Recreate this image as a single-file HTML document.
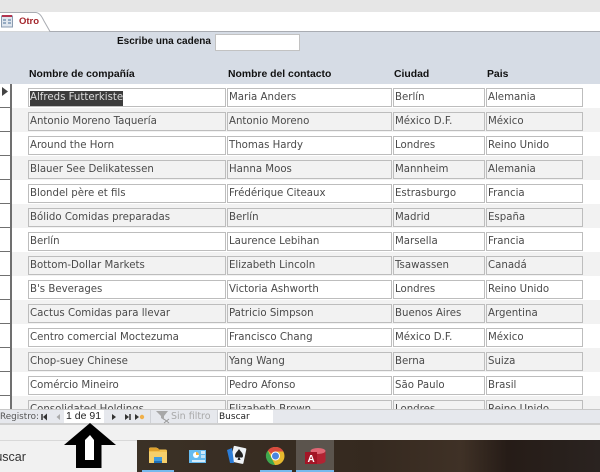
<!DOCTYPE html>
<html><head><meta charset="utf-8"><style>
html,body{margin:0;padding:0}
body{width:600px;height:472px;position:relative;overflow:hidden;background:#fff;font-family:"DejaVu Sans","Liberation Sans",sans-serif;}
div{position:absolute;box-sizing:border-box}
.t{white-space:nowrap;font-size:10px;color:#555;line-height:14px}
.h{white-space:nowrap;font-weight:bold;color:#111;font-family:"Liberation Sans",sans-serif;font-size:10.4px;line-height:14px}
.b{height:19px;border:1px solid #bdbdbd;overflow:hidden;padding:2px 0 0 1px;font-size:10.2px;line-height:14px;color:#4a4a4a;white-space:nowrap;font-family:"DejaVu Sans",sans-serif}
.c1{left:28px;width:198px}.c2{left:227px;width:165px}.c3{left:393px;width:92px}.c4{left:486px;width:97px}
.w{background:#fff}.g{background:#f2f2f2}
.rs{left:0;width:12px;height:24px;background:#fff;border-right:2px solid #707070;border-bottom:1px solid #707070}
</style></head><body>
<div style="left:0;top:0;width:600px;height:12px;background:#e6e6e6"></div>
<div style="left:0;top:12px;width:600px;height:20px;background:#fff"></div>
<div style="left:0;top:31px;width:600px;height:1px;background:#a9acb2"></div>
<div style="left:0;top:32px;width:600px;height:52px;background:#d6dce5"></div>
<svg style="position:absolute;left:0;top:11px" width="52" height="22"><path d="M0 1.5H36C40 2 42 6 44 10L50 20.5H0Z" fill="#fff"/><path d="M0 1.5H36C40 2 42 6 44 10L50 20.5" fill="none" stroke="#a9acb2"/><rect x="1.500" y="5" width="11" height="11" fill="#dfe6ee" stroke="#8a9bb0"/><rect x="2" y="4" width="10" height="2" fill="#b2344f"/><path d="M3 9h3M3 12h3M8 9h3M8 12h3" stroke="#4a6d96"/></svg>
<div class="h" style="left:19px;top:15px;color:#a4262c;font-size:9.500px">Otro</div>
<div class="h" style="left:117px;top:35px;font-size:10px">Escribe una cadena</div>
<div style="left:215px;top:34px;width:85px;height:17px;background:#fff;border:1px solid #c2c2c2"></div>
<div class="h" style="left:29px;top:68px">Nombre de compañía</div>
<div class="h" style="left:228px;top:68px">Nombre del contacto</div>
<div class="h" style="left:394px;top:68px">Ciudad</div>
<div class="h" style="left:487px;top:68px">Pais</div>

<div style="left:0;top:84px;width:600px;height:325px;background:#fff;overflow:hidden">
<div style="left:0;top:24px;width:600px;height:24px;background:#f2f2f2"></div>
<div style="left:0;top:72px;width:600px;height:24px;background:#f2f2f2"></div>
<div style="left:0;top:120px;width:600px;height:24px;background:#f2f2f2"></div>
<div style="left:0;top:168px;width:600px;height:24px;background:#f2f2f2"></div>
<div style="left:0;top:216px;width:600px;height:24px;background:#f2f2f2"></div>
<div style="left:0;top:264px;width:600px;height:24px;background:#f2f2f2"></div>
<div style="left:0;top:312px;width:600px;height:24px;background:#f2f2f2"></div>
<div class="rs" style="top:0"></div><div class="rs" style="top:24px"></div><div class="rs" style="top:48px"></div><div class="rs" style="top:72px"></div><div class="rs" style="top:96px"></div><div class="rs" style="top:120px"></div><div class="rs" style="top:144px"></div><div class="rs" style="top:168px"></div><div class="rs" style="top:192px"></div><div class="rs" style="top:216px"></div><div class="rs" style="top:240px"></div><div class="rs" style="top:264px"></div><div class="rs" style="top:288px"></div><div class="rs" style="top:312px"></div>
<svg style="position:absolute;left:1px;top:3px" width="8" height="10"><path d="M1 0L7 4.5L1 9Z" fill="#444"/></svg>

<div class="b w c1" style="top:4px"><span style="background:#3c3c3c;color:#ddd;display:inline-block;height:15px">Alfreds Futterkiste</span></div><div class="b w c2" style="top:4px">Maria Anders</div><div class="b w c3" style="top:4px">Berlín</div><div class="b w c4" style="top:4px">Alemania</div>
<div class="b g c1" style="top:28px">Antonio Moreno Taquería</div><div class="b g c2" style="top:28px">Antonio Moreno</div><div class="b g c3" style="top:28px">México D.F.</div><div class="b g c4" style="top:28px">México</div>
<div class="b w c1" style="top:52px">Around the Horn</div><div class="b w c2" style="top:52px">Thomas Hardy</div><div class="b w c3" style="top:52px">Londres</div><div class="b w c4" style="top:52px">Reino Unido</div>
<div class="b g c1" style="top:76px">Blauer See Delikatessen</div><div class="b g c2" style="top:76px">Hanna Moos</div><div class="b g c3" style="top:76px">Mannheim</div><div class="b g c4" style="top:76px">Alemania</div>
<div class="b w c1" style="top:100px">Blondel père et fils</div><div class="b w c2" style="top:100px">Frédérique Citeaux</div><div class="b w c3" style="top:100px">Estrasburgo</div><div class="b w c4" style="top:100px">Francia</div>
<div class="b g c1" style="top:124px">Bólido Comidas preparadas</div><div class="b g c2" style="top:124px">Berlín</div><div class="b g c3" style="top:124px">Madrid</div><div class="b g c4" style="top:124px">España</div>
<div class="b w c1" style="top:148px">Berlín</div><div class="b w c2" style="top:148px">Laurence Lebihan</div><div class="b w c3" style="top:148px">Marsella</div><div class="b w c4" style="top:148px">Francia</div>
<div class="b g c1" style="top:172px">Bottom-Dollar Markets</div><div class="b g c2" style="top:172px">Elizabeth Lincoln</div><div class="b g c3" style="top:172px">Tsawassen</div><div class="b g c4" style="top:172px">Canadá</div>
<div class="b w c1" style="top:196px">B's Beverages</div><div class="b w c2" style="top:196px">Victoria Ashworth</div><div class="b w c3" style="top:196px">Londres</div><div class="b w c4" style="top:196px">Reino Unido</div>
<div class="b g c1" style="top:220px">Cactus Comidas para llevar</div><div class="b g c2" style="top:220px">Patricio Simpson</div><div class="b g c3" style="top:220px">Buenos Aires</div><div class="b g c4" style="top:220px">Argentina</div>
<div class="b w c1" style="top:244px">Centro comercial Moctezuma</div><div class="b w c2" style="top:244px">Francisco Chang</div><div class="b w c3" style="top:244px">México D.F.</div><div class="b w c4" style="top:244px">México</div>
<div class="b g c1" style="top:268px">Chop-suey Chinese</div><div class="b g c2" style="top:268px">Yang Wang</div><div class="b g c3" style="top:268px">Berna</div><div class="b g c4" style="top:268px">Suiza</div>
<div class="b w c1" style="top:292px">Comércio Mineiro</div><div class="b w c2" style="top:292px">Pedro Afonso</div><div class="b w c3" style="top:292px">São Paulo</div><div class="b w c4" style="top:292px">Brasil</div>
<div class="b g c1" style="top:316px">Consolidated Holdings</div><div class="b g c2" style="top:316px">Elizabeth Brown</div><div class="b g c3" style="top:316px">Londres</div><div class="b g c4" style="top:316px">Reino Unido</div>
</div>

<div style="left:0;top:409px;width:600px;height:1px;background:#c8c8c8"></div>
<div style="left:0;top:410px;width:600px;height:13px;background:#e6e8ed"></div>
<div style="left:0;top:423px;width:600px;height:2px;background:#cfcfcf"></div>
<div style="left:0;top:425px;width:600px;height:15px;background:#f1f1f1"></div>
<div class="t" style="left:0;top:411px;font-size:8.800px;line-height:13px;color:#555">Registro:</div>
<svg style="position:absolute;left:40px;top:412px" width="110" height="10"><path d="M2 2v6" stroke="#333" stroke-width="1.5"/><path d="M7 1.500L3 5L7 8.500Z" fill="#333"/><path d="M20 2L16.500 5L20 8Z" fill="#aaa"/><path d="M72 2L76 5L72 8Z" fill="#333"/><path d="M85 2L89 5L85 8Z" fill="#333"/><path d="M90 2v6" stroke="#333" stroke-width="1.500"/><path d="M95 2L99 5L95 8Z" fill="#333"/><circle cx="102" cy="5" r="2.200" fill="#f0b04a"/></svg>
<div style="left:64px;top:410px;width:40px;height:13px;background:#fff"></div>
<div class="t" style="left:66px;top:410px;font-size:10.500px;line-height:13px;color:#222;font-family:'Liberation Sans',sans-serif">1 de 91</div>
<div style="left:150px;top:410px;width:1px;height:13px;background:#cfd1d6"></div>
<svg style="position:absolute;left:155px;top:410px" width="16" height="14"><path d="M1 1H13L9 6V10L6 8V6Z" fill="#a8a8a8"/><path d="M9 9L14 13M14 9L9 13" stroke="#999"/></svg>
<div class="t" style="left:171px;top:410px;font-size:9.500px;line-height:13px;color:#a9a9a9">Sin filtro</div>
<div style="left:217px;top:410px;width:1px;height:13px;background:#cfd1d6"></div>
<div style="left:218px;top:410px;width:55px;height:13px;background:#fff"></div>
<div class="t" style="left:219px;top:411px;font-size:9px;line-height:13px;color:#222">Buscar</div>

<div style="left:0;top:440px;width:137px;height:32px;background:#f1f1f1;border-top:1px solid #d8d8d8"></div>
<div class="t" style="left:-13px;top:449px;font-size:12.500px;line-height:16px;color:#333;font-family:'Liberation Sans',sans-serif">Buscar</div>
<div style="left:137px;top:440px;width:463px;height:32px;background:linear-gradient(90deg,#3b3126 0%,#35291f 50%,#3f3126 70%,#261c17 80%,#2a2320 100%)"></div>
<div style="left:296px;top:440px;width:38px;height:32px;background:#5b544d"></div>
<svg style="position:absolute;left:137px;top:440px" width="230" height="32">
<path d="M12 9c0-1 .5-1.500 1.500-1.500h6l2 2h7c1 0 1.500.5 1.500 1.500V23H12Z" fill="#f2c14e"/><path d="M12 8h9l2 3H12Z" fill="#e0a12e"/><rect x="12" y="12" width="18" height="11" fill="#f5cf6b"/><rect x="17" y="17" width="8" height="4" fill="#3f9be0"/><rect x="17" y="21" width="8" height="2" fill="#1f70b8"/>
<rect x="5" y="30" width="32" height="2" fill="#76b9ed"/>
<rect x="52" y="10" width="17" height="13" fill="#66bbf0"/><circle cx="59" cy="15" r="3" fill="#fff"/><path d="M59 15V12A3 3 0 0 1 62 15Z" fill="#f2b13c"/><rect x="64" y="11" width="4" height="3" fill="#cfe9fb"/><rect x="55" y="20" width="13" height="2" fill="#d4ecfb"/><rect x="64" y="15" width="4" height="3" fill="#bfe2f8"/>
<g transform="rotate(12 102 15)"><rect x="95" y="7" width="13" height="16" rx="1" fill="#eef2f6"/></g><path d="M95 8L90 10L93 23L97 23Z" fill="#2b7dd8"/><path d="M102 9c-2 3-4 4-4 7 0 2 2 2 3.500 1l-1 3h3l-1-3c1.500 1 3.500 1 3.500-1 0-3-2-4-4-7Z" fill="#222"/>
<circle cx="138.500" cy="16" r="9" fill="#e8b92e"/><path d="M138.500 7a9 9 0 0 1 8 4.500H138.500a4.500 4.500 0 0 0-4 2.500L130.800 10.500A9 9 0 0 1 138.500 7Z" fill="#d94b3f"/><path d="M130.800 10.500L134.600 18.200L138 25A9 9 0 0 1 130.800 10.500Z" fill="#3ea84f"/><circle cx="138.500" cy="16" r="4.500" fill="#fff"/><circle cx="138.500" cy="16" r="3.500" fill="#4a86e0"/>
<rect x="123" y="30" width="32" height="2" fill="#76b9ed"/>
<ellipse cx="181" cy="11" rx="7.500" ry="3" fill="#e06674"/><path d="M173.500 11V21c0 1.700 3.400 3 7.500 3s7.500-1.300 7.500-3V11c0 1.700-3.400 3-7.500 3S173.500 12.700 173.500 11Z" fill="#b32232"/><rect x="168" y="12" width="12" height="12" fill="#a31526"/><text x="170.500" y="22" font-family="Liberation Sans,sans-serif" font-size="10" font-weight="bold" fill="#fff">A</text>
<rect x="159" y="30" width="38" height="2" fill="#76b9ed"/>
</svg>

<svg style="position:absolute;left:62px;top:422px" width="56" height="50"><path d="M28 1L54 23H39.500V46H14V23H2Z" fill="#000"/><path d="M28 13L23 18V38H32V18Z" fill="#fff"/></svg>
</body></html>
